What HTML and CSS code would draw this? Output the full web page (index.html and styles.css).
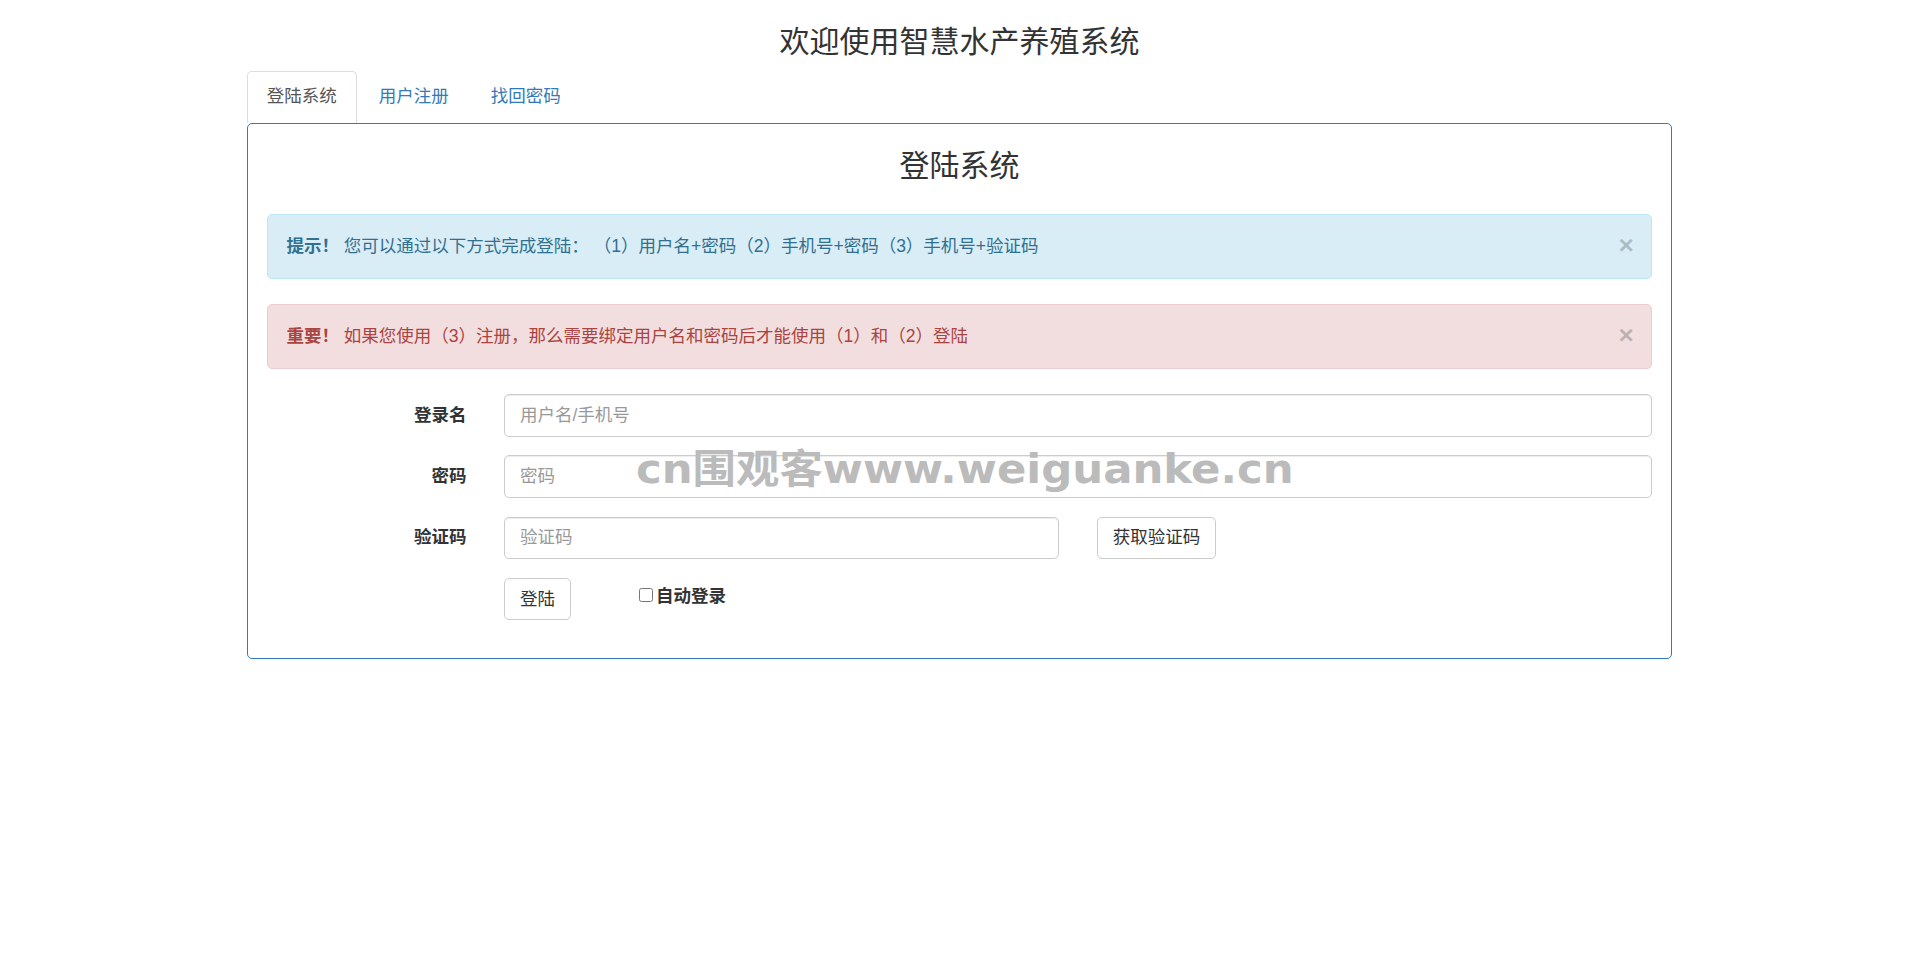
FILE: index.html
```html
<!DOCTYPE html>
<html lang="zh-CN">
<head>
    <meta charset="UTF-8">
    <title>智慧水产养殖系统</title>
    <link rel="stylesheet" href="styles.css">
</head>
<body>
<div class="page">
    <h1 class="page-title">欢迎使用智慧水产养殖系统</h1>
    <ul class="tabs">
        <li class="tab active">登陆系统</li>
        <li class="tab">用户注册</li>
        <li class="tab">找回密码</li>
    </ul>
    <div class="panel">
        <h2 class="panel-title">登陆系统</h2>
        <div class="panel-body">
            <div class="alert alert-info">
                <span class="close">×</span>
                <strong>提示！</strong> 您可以通过以下方式完成登陆： （1）用户名+密码（2）手机号+密码（3）手机号+验证码
            </div>
            <div class="alert alert-danger">
                <span class="close">×</span>
                <strong>重要！</strong> 如果您使用（3）注册，那么需要绑定用户名和密码后才能使用（1）和（2）登陆
            </div>
            <form class="login-form">
                <div class="row">
                    <label class="form-label">登录名</label>
                    <div class="col col-10">
                        <input type="text" class="input" placeholder="用户名/手机号">
                    </div>
                </div>
                <div class="row">
                    <label class="form-label">密码</label>
                    <div class="col col-10">
                        <input type="password" class="input" placeholder="密码">
                    </div>
                </div>
                <div class="row">
                    <label class="form-label">验证码</label>
                    <div class="col col-5">
                        <input type="text" class="input" placeholder="验证码">
                    </div>
                    <div class="col col-3">
                        <button type="button" class="btn">获取验证码</button>
                    </div>
                </div>
                <div class="row">
                    <div class="form-label"></div>
                    <div class="col col-1">
                        <button type="button" class="btn">登陆</button>
                    </div>
                    <div class="col col-3">
                        <label class="remember"><input type="checkbox" class="check">自动登录</label>
                    </div>
                </div>
            </form>
        </div>
        <div class="watermark">cn围观客www.weiguanke.cn</div>
    </div>
</div>
</body>
</html>
```

FILE: styles.css
```css
body {
    margin: 0;
    font-family: "Liberation Sans", "Noto Sans CJK SC", sans-serif;
    font-size: 17.5px;
    line-height: 25px;
    color: #333;
    background-color: #fff;
}
.page {
    width: 1425px;
    margin: 0 auto;
}
.page-title {
    margin: 25px 0 12.5px;
    font-size: 30px;
    font-weight: 400;
    line-height: 33px;
    text-align: center;
}
.tabs {
    display: flex;
    margin: 0;
    padding: 0;
    list-style: none;
}
.tab {
    margin-right: 2.5px;
    padding: 12.5px 18.75px 13.5px;
    border: 1px solid transparent;
    border-bottom: 0;
    border-radius: 5px 5px 0 0;
    color: #337ab7;
    cursor: pointer;
}
.tab.active {
    color: #555;
    border-color: #ddd;
}
.panel {
    position: relative;
    border: 1px solid #337ab7;
    border-radius: 5px;
}
.panel-title {
    margin: 25px 0 12.5px;
    font-size: 30px;
    font-weight: 400;
    line-height: 33px;
    text-align: center;
}
.panel-body {
    padding: 20px 18.75px 18.75px;
}
.alert {
    margin-bottom: 25px;
    padding: 19px 43.75px 19px 18.75px;
    border: 1px solid transparent;
    border-radius: 5px;
}
.alert-info {
    color: #31708f;
    background-color: #d9edf7;
    border-color: #bce8f1;
}
.alert-danger {
    color: #a94442;
    background-color: #f2dede;
    border-color: #ebccd1;
}
.close {
    float: right;
    position: relative;
    top: -2.5px;
    right: -26.25px;
    font-size: 26.25px;
    font-weight: 700;
    line-height: 1;
    color: #000;
    opacity: .2;
    text-shadow: 0 1px 0 #fff;
    cursor: pointer;
}
.login-form {
    margin: 0 -18.75px;
}
.row {
    display: flex;
    margin-bottom: 18.75px;
}
.form-label,
.col {
    box-sizing: border-box;
    padding: 0 18.75px;
}
.form-label {
    width: 16.6667%;
    padding-top: 8.75px;
    font-weight: 700;
    text-align: right;
}
.col-10 {
    width: 83.3333%;
}
.col-5 {
    width: 41.6667%;
}
.col-3 {
    width: 25%;
}
.col-1 {
    width: 8.3333%;
}
.input {
    display: block;
    box-sizing: border-box;
    width: 100%;
    height: 42.5px;
    padding: 7.5px 15px;
    font-family: inherit;
    font-size: 17.5px;
    line-height: 25px;
    color: #555;
    background-color: #fff;
    border: 1px solid #ccc;
    border-radius: 5px;
    box-shadow: inset 0 1px 1px rgba(0, 0, 0, .075);
}
.input::placeholder {
    color: #999;
}
.btn {
    height: 42.5px;
    padding: 7.5px 15px;
    font-family: inherit;
    font-size: 17.5px;
    line-height: 25px;
    color: #333;
    background-color: #fff;
    border: 1px solid #ccc;
    border-radius: 5px;
    cursor: pointer;
}
.remember {
    display: flex;
    margin-left: 17px;
    padding-top: 6.5px;
    font-weight: 700;
}
.check {
    width: 14px;
    height: 14px;
    margin: 3.5px 2.5px 0 0;
}
.watermark {
    position: absolute;
    left: 388px;
    top: 325px;
    font-family: "DejaVu Sans", "Noto Sans CJK SC", sans-serif;
    font-size: 40px;
    font-weight: 700;
    line-height: 40px;
    color: #bbb;
    white-space: nowrap;
    transform: scaleX(1.085);
    transform-origin: left center;
    pointer-events: none;
}
```
